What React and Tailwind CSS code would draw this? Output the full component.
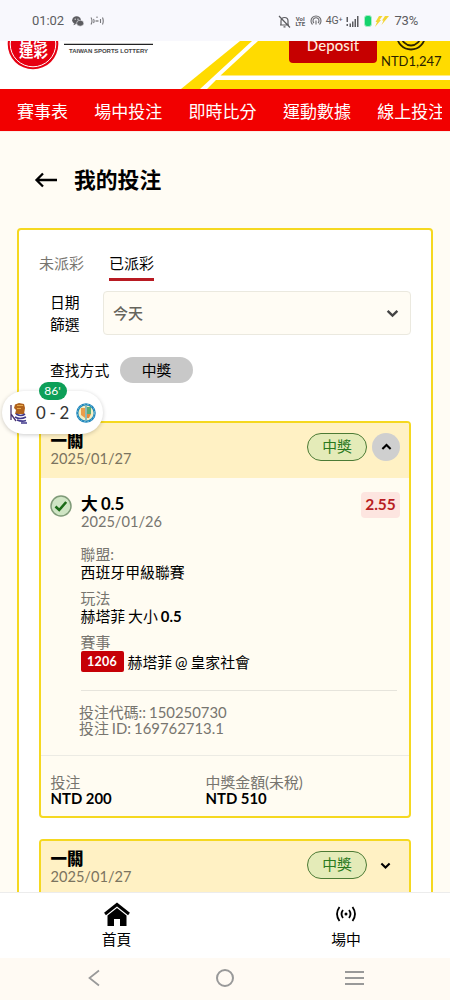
const navItems = ['賽事表', '場中投注', '即時比分', '運動數據', '線上投注'];

const details = [
  { label: '聯盟:', value: '西班牙甲級聯賽' },
  { label: '玩法', value: '赫塔菲 大小', strong: '0.5' },
];

function Chevron({ up, className }) {
  return (
    <svg viewBox="0 0 12 8" className={className} fill="none" stroke="currentColor" strokeWidth="2.2">
      <path d={up ? 'M1.5 6.5 6 2l4.5 4.5' : 'M1.5 1.5 6 6l4.5-4.5'} />
    </svg>
  );
}

function StatusBar() {
  return (
    <div className="flex h-[41px] shrink-0 items-center bg-[#f8f8fd] pt-px pr-[32px] pl-[32px] font-['Roboto',sans-serif] text-[#5c5c60]">
      <span className="text-[13px] tracking-[-0.1px]">01:02</span>
      <svg viewBox="0 0 12 11" className="ml-[8px] h-[11px] w-[12px]" fill="#5c5c60">
        <ellipse cx="4.6" cy="4.2" rx="4.4" ry="3.9" />
        <path d="M2 7.2 1.6 9.2 4 8z" />
        <ellipse cx="8.2" cy="7.2" rx="3.6" ry="3" stroke="#f8f8fd" strokeWidth=".6" />
        <circle cx="3.2" cy="3.2" r=".6" fill="#f8f8fd" />
        <circle cx="6" cy="3.2" r=".6" fill="#f8f8fd" />
      </svg>
      <svg viewBox="0 0 14 12" className="ml-[6px] h-[12px] w-[14px]" fill="none" stroke="#77777b" strokeWidth="1.1">
        <path d="M1 2.500q2 3.500 0 7M3.500 4q1.200 2 0 4M10.500 4v4M12.500 2.500q1.500 3.500 0 7M7 1.500v1.500" />
        <path d="M5.500 6h3" strokeWidth="1.300" />
      </svg>

      <svg viewBox="0 0 13 13" className="ml-auto h-[13px] w-[13px]" fill="none" stroke="#5c5c60" strokeWidth="1.2">
        <path d="M2 10h9M3 10V6a3.5 3.5 0 0 1 7 0v4M5.5 11.8h2M1 1l11 11.5" />
      </svg>
      <span className="ml-[4px] flex w-[11px] flex-col text-center text-[6px] leading-[5.5px] font-bold">
        <span>VoI</span>
        <span>LTE</span>
      </span>
      <svg viewBox="0 0 12 12" className="ml-[4px] h-[12px] w-[12px]" fill="none" stroke="#68686c" strokeWidth="1.1">
        <path d="M2.5 9.5a5 5 0 1 1 7 0M4 8a3 3 0 1 1 4 0M6 5.5v4" />
      </svg>
      <span className="ml-[4px] text-[10.500px] tracking-[-0.2px]">4G⁺</span>
      <svg viewBox="0 0 13 11" className="ml-[4px] h-[11px] w-[13px]" fill="#5c5c60">
        <path d="M.5 1H2v5H.5zM.5 8H2v2H.5zM3.500 7.500H5V11H3.500zM6 5.500h1.500V11H6zM8.500 3H10v8H8.500zM11 0h1.500v11H11z" />
      </svg>
      <span className="ml-[5px] h-[12px] w-[8px] rounded-[3px] border border-[#a9ecc8] bg-[#14d46e]" />
      <svg viewBox="0 0 14 11" className="ml-[3px] h-[11px] w-[14px]" fill="#f3d533">
        <path d="M4 0h3.500L4.500 4H6L0 11l2-5H.5zM10 0h4L6.500 9l2-4.500H7z" />
      </svg>
      <span className="ml-[5px] text-[13px] tracking-[-0.2px]">73%</span>
    </div>
  );
}

function Header() {
  return (
    <header className="relative flex h-[48px] shrink-0 overflow-hidden bg-white">
      <svg viewBox="0 0 450 48" className="absolute inset-0 h-[48px] w-[450px]">
        <path d="M181 48 240 0H450V48z" fill="#ffdb00" />
        <path d="M200 48 252 0h6L220.500 34.500H450v4.500H216l-9 9z" fill="#fff" />
        <circle cx="33" cy="3" r="25.300" fill="#e60012" />
        <circle cx="33" cy="3" r="22.800" fill="none" stroke="#fff" strokeWidth="1" />
        <text x="33" y="1.500" textAnchor="middle" fontSize="14" fontWeight="700" fill="#fff" fontFamily="Noto Sans CJK TC, sans-serif">台灣</text>
        <text x="33.500" y="16" textAnchor="middle" fontSize="14.500" fontWeight="700" fill="#fff" fontFamily="Noto Sans CJK TC, sans-serif">運彩</text>
        <path d="M64 3.300h89" stroke="#222" strokeWidth="1.200" />
        <text x="69" y="11.500" fontSize="6" fill="#444" textLength="79" lengthAdjust="spacingAndGlyphs" fontFamily="Liberation Sans, sans-serif" fontWeight="700">TAIWAN SPORTS LOTTERY</text>
      </svg>
      <div className="relative ml-[289px] flex h-[22px] w-[88px] items-end justify-center rounded-b-[4px] bg-[#c60000]">
        <span className="mb-[8px] text-[15px] leading-[20px] font-medium tracking-[0.1px] text-[#ffe9dc]">Deposit</span>
      </div>
      <div className="relative ml-[4px] flex flex-col items-center text-[#2a2200]">
        <svg viewBox="0 0 30 10" className="h-[10px] w-[30px]" fill="none" stroke="currentColor" strokeWidth="1.800">
          <circle cx="15" cy="-5.500" r="14" />
          <circle cx="15" cy="-5" r="9.500" />
        </svg>
        <span className="mt-[2px] text-[13px] leading-[16px]">NTD1,247</span>
      </div>
    </header>
  );
}

function WinPill() {
  return (
    <span className="flex h-[28px] w-[60px] items-center justify-center rounded-full border border-[#4c7a35] bg-[#e4ebb8] text-[14.800px] text-[#2b7a1e]">
      中獎
    </span>
  );
}

function BetHeader({ open }) {
  return (
    <div className="flex h-[55px] shrink-0 items-start bg-[#fff1c4] pt-[9px] pr-[9px] pl-[9.500px]">
      <div className="flex-1">
        <p className="text-[16.500px] leading-[18px] font-black text-black">一關</p>
        <p className="text-[14.600px] leading-[18px] text-[#7b745f]">2025/01/27</p>
      </div>
      <div className="flex items-center gap-[5px] pt-[0.500px]">
        <WinPill />
        <span
          className={
            open
              ? 'flex size-[28px] items-center justify-center rounded-full bg-[#cfcfcf]'
              : 'flex size-[28px] items-center justify-center pt-[3px] pr-[2px]'
          }
        >
          <Chevron up={open} className="h-[7.500px] w-[11px] text-black" />
        </span>
      </div>
    </div>
  );
}

function BetCard() {
  return (
    <section className="flex h-[397px] shrink-0 flex-col overflow-hidden rounded-[4px] border-2 border-[#f5d820] bg-[#fffcf2]">
      <BetHeader open />
      <div className="flex h-[54px] shrink-0 pt-[13px] pr-[9px] pl-[9px]">
        <svg viewBox="0 0 22 22" className="mt-[4px] size-[22px]">
          <circle cx="11" cy="11" r="10" fill="#cfe5c4" stroke="#7f9a78" strokeWidth="1.500" />
          <path d="m5.500 11.500 3.700 3.500 7-8" fill="none" stroke="#1c6b18" strokeWidth="2.600" />
        </svg>
        <div className="ml-[9px] flex-1">
          <p className="text-[16.700px] leading-[26px] font-bold text-black [word-spacing:-0.800px]">大 0.5</p>
          <p className="-mt-[4px] text-[14.600px] leading-[18px] text-[#77756f]">2025/01/26</p>
        </div>
        <span className="mt-[0.500px] flex h-[26px] w-[39px] items-center justify-center rounded-[4px] bg-[#fde5e0] pt-px text-[15.500px] font-bold text-[#b81c22]">
          2.55
        </span>
      </div>

      <div className="mr-[12px] ml-[39.500px] flex h-[159px] shrink-0 flex-col border-b border-[#e6e4dc] pt-[13px] text-[14.900px] leading-[18px] text-black [word-spacing:-0.900px]">
        {details.map((d) => (
          <div key={d.label} className="mb-[8px]">
            <p className="text-[#77756f]">{d.label}</p>
            <p>
              {d.value} {d.strong && <b>{d.strong}</b>}
            </p>
          </div>
        ))}
        <p className="text-[#77756f]">賽事</p>
        <p className="flex items-center">
          <span className="mr-[4px] flex h-[21px] w-[43px] items-center justify-center rounded-[2px] bg-[#c60006] text-[12.500px] font-bold tracking-[0.300px] text-white">
            1206
          </span>
          赫塔菲 @ 皇家社會
        </p>
      </div>

      <div className="flex h-[65px] shrink-0 flex-col border-b border-[#ecebe4] pt-[13px] pl-[38px] text-[14.900px] leading-[16px] text-[#77756f] [word-spacing:-0.800px]">
        <p>投注代碼:: 150250730</p>
        <p>投注 ID: 169762713.1</p>
      </div>

      <div className="flex pt-[18px] pl-[9.500px] text-[14.900px] leading-[16px]">
        <div className="w-[155px]">
          <p className="text-[#77756f]">投注</p>
          <p className="font-bold text-black">NTD 200</p>
        </div>
        <div>
          <p className="text-[#77756f]">中獎金額(未稅)</p>
          <p className="font-bold text-black">NTD 510</p>
        </div>
      </div>
    </section>
  );
}

function LiveScore() {
  return (
    <div className="absolute top-[382px] left-[2px] z-10 flex flex-col items-center">
      <div className="mt-[9px] flex h-[43px] w-[101px] items-center rounded-full bg-white pl-[7px] shadow-[0_1px_4px_rgba(0,0,0,0.2)]">
        <svg viewBox="0 0 20 22" className="h-[22px] w-[20px]">
          <path d="M2 3v15M2 12l5 7" stroke="#49336f" strokeWidth="1.300" fill="none" />
          <path d="M6 2.500 10 1l5 1 1 4-1 6H6L7 8 5 6z" fill="#b0621d" />
          <path d="M8 3.500h6M8 6.500h4" stroke="#e6a94a" />
          <path d="M7 12q5 3 9 0M6 15q5 3 11 0M8 18q5 2 9 .5M12 21h6" stroke="#423a8c" strokeWidth="1.600" fill="none" />
        </svg>
        <span className="ml-[7px] w-[33px] text-center text-[16.800px] whitespace-nowrap text-[#333] [word-spacing:-0.500px]">0 - 2</span>
        <svg viewBox="0 0 20 20" className="ml-[7px] size-[20px]">
          <circle cx="10" cy="10" r="8.700" fill="#f1efc4" stroke="#2187bb" strokeWidth="2.200" />
          <circle cx="10" cy="10" r="8.700" fill="none" stroke="#7cc4e0" strokeWidth="1" strokeDasharray="1.500 2" />
          <path d="M5 5h4v10L5 12z" fill="#ec9d49" />
          <path d="M11 4h4v7h-4z" fill="#58ad78" />
          <path d="M10 3v14" stroke="#2c86a8" />
          <path d="M11 11h4l-2 4h-2z" fill="#e98a3b" />
        </svg>
      </div>
      <span className="absolute top-0 flex h-[18px] w-[28px] items-center justify-center rounded-full bg-[#0d9f58] text-[12px] text-white">
        86'
      </span>
    </div>
  );
}

export default function App() {
  return (
    <div className="relative flex h-[1000px] w-[450px] flex-col overflow-hidden bg-[#fffcf4] font-['Lato','Noto_Sans_CJK_TC',sans-serif]">
      <StatusBar />
      <Header />
      <nav className="h-[42px] shrink-0 bg-[#f20000] pr-[8px] pl-[17px]">
        <div className="flex h-full items-center gap-[26.300px] overflow-hidden pt-[3px] text-[17px] whitespace-nowrap text-white">
          {navItems.map((item) => (
            <span key={item}>{item}</span>
          ))}
        </div>
      </nav>

      <main className="min-h-0 flex-1 overflow-hidden border-t border-[#fbeee8] px-[17px]">
        <div className="flex h-[96px] items-center pl-[17px]">
          <svg viewBox="0 0 24 16" className="h-[16px] w-[24px]" fill="none" stroke="#000" strokeWidth="2.300">
            <path d="M23 8H2.500M9 1.500 2.500 8 9 14.500" />
          </svg>
          <h1 className="ml-[16px] text-[21.800px] leading-[32px] font-bold text-black">我的投注</h1>
        </div>

        <div className="flex h-[720px] w-[416px] flex-col rounded-[4px] border-2 border-[#f5d820] bg-white px-[20px]">
          <div className="flex gap-[25px] pt-[21px] text-[15px] leading-[24px]">
            <span className="h-[30px] text-[#77756f]">未派彩</span>
            <span className="h-[30px] border-b-[3px] border-[#b81a22] text-black">已派彩</span>
          </div>

          <div className="mt-[10px] flex items-center pl-[11px]">
            <span className="w-[53px] pr-[20px] text-[14.800px] leading-[22px] text-black">日期篩選</span>
            <div className="flex h-[44px] flex-1 items-center justify-between rounded-[4px] border border-[#ebe9df] bg-[#fffcf4] pr-[11px] pl-[9px] text-[15px] font-medium text-[#66645c]">
              今天
              <Chevron className="h-[9px] w-[13px] text-[#444]" />
            </div>
          </div>

          <div className="mt-[22px] flex items-center pl-[11px] text-[14.800px] text-black">
            <span className="w-[70px]">查找方式</span>
            <span className="flex h-[26px] w-[73px] items-center justify-center rounded-full bg-[#c8c8c8]">中獎</span>
          </div>

          <div className="mt-[38px] flex flex-col gap-[21px]">
            <BetCard />
            <section className="h-[60px] shrink-0 overflow-hidden rounded-t-[4px] border-2 border-[#f5d820] bg-[#fff1c4]">
              <BetHeader />
            </section>
          </div>
        </div>
      </main>

      <footer className="flex h-[66px] shrink-0 border-t border-[#ececec] bg-white text-[14.800px] text-black">
        <div className="flex w-[233px] shrink-0 flex-col items-center pt-[9px]">
          <svg viewBox="0 0 26 24" className="h-[24px] w-[26px]">
            <path d="M1 12 13 2.500 25 12" fill="none" stroke="#000" strokeWidth="3" />
            <path d="M3.500 13.500 13 6l9.500 7.500V24H16v-7h-6v7H3.500z" />
          </svg>
          <span className="mt-[3px] leading-[20px]">首頁</span>
        </div>
        <div className="flex w-[226px] shrink-0 flex-col items-center pt-[12px]">
          <svg viewBox="0 0 22 18" className="h-[18px] w-[22px]" fill="none" stroke="#000" strokeWidth="1.800">
            <path d="M4.500 2q-5 7 0 14M8 5q-3 4 0 8M14 5q3 4 0 8M17.500 2q5 7 0 14" />
            <circle cx="11" cy="9" r="1.500" fill="#000" stroke="none" />
          </svg>
          <span className="mt-[6px] leading-[20px]">場中</span>
        </div>
      </footer>

      <div className="flex h-[42px] shrink-0 items-center bg-[#fffaf3] pb-[2px] pl-[88px]">
        <svg viewBox="0 0 12 18" className="h-[18px] w-[12px]" fill="none" stroke="#999" strokeWidth="1.700">
          <path d="M11 1.500 1.500 9 11 16.500" />
        </svg>
        <span className="ml-[116px] size-[18px] rounded-full border-2 border-[#999]" />
        <svg viewBox="0 0 19 16" className="ml-[111px] h-[16px] w-[19px]" fill="none" stroke="#999" strokeWidth="1.800">
          <path d="M0 2h19M0 8h19M0 14h19" />
        </svg>
      </div>

      <LiveScore />
    </div>
  );
}
